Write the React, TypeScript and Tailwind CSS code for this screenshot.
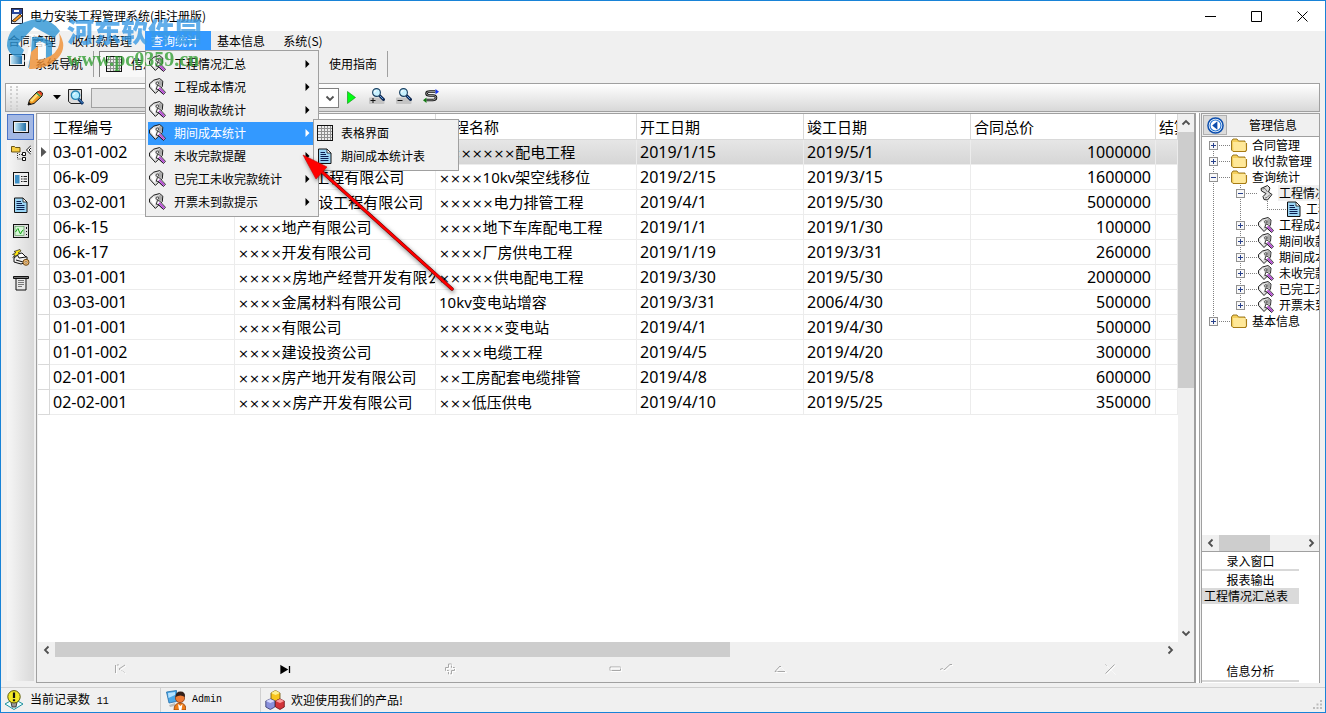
import React from "react";

type IconProps = { className?: string };

function TagIcon({ className = "h-4 w-4" }: IconProps) {
  return (
    <svg viewBox="0 0 16 16" className={`shrink-0 ${className}`} aria-hidden="true">
      <path d="M.5 5.5 4.500 2 10 .5 13 3 12.500 8 6 14.500 .5 8.500Z" fill="#dedede" stroke="#111" strokeWidth=".9" />
      <path d="M1.500 6.500 5 3.500 6.500 8 5 12Z" fill="#fff" />
      <path d="M7.500 4.500 10.500 1.500 12.300 3.500 12 7.500 10 7Z" fill="#a8a8a8" />
      <circle cx="7.800" cy="4.900" r="1.200" fill="#fff" stroke="#222" strokeWidth=".8" />
      <path d="m6.800 10.500 1.200-3.500L10 7.500l5.500 6-1.800 2L8.500 10.800Z" fill="#fff" stroke="#111" strokeWidth=".8" />
      <path d="m9.500 9.300 4.900 5" stroke="#b44ed0" strokeWidth="1.900" />
      <path d="m8.600 10.500 4.600 4.700" stroke="#20102a" strokeWidth=".8" />
    </svg>
  );
}

function GridIcon({ className = "h-4 w-4" }: IconProps) {
  return (
    <svg viewBox="0 0 16 16" className={`shrink-0 ${className}`} shapeRendering="crispEdges" aria-hidden="true">
      <rect x=".5" y=".5" width="15" height="15" fill="#eee" stroke="#111" />
      <path d="M4.500 1v14M7.500 1v14M10.500 1v14M13.500 1v14M1 3.500h14M1 6.500h14M1 9.500h14M1 12.500h14" stroke="#909090" />
    </svg>
  );
}

function DocIcon({ className = "h-4 w-4" }: IconProps) {
  return (
    <svg viewBox="0 0 16 16" className={`shrink-0 ${className}`} aria-hidden="true">
      <path d="M1.500 1h8.500l4 4v10.500H1.500Z" fill="#9bd5f5" stroke="#111" />
      <path d="M10 1v4h4Z" fill="#fff" stroke="#111" strokeWidth=".8" />
      <path d="M3.500 4.500H8M3.500 6.500H9M3.500 8.500h8M3.500 10.500h8M3.500 12.500h8" stroke="#0b1e50" />
    </svg>
  );
}

function WindowIcon({ className = "h-4 w-4" }: IconProps) {
  return (
    <svg viewBox="0 0 16 16" className={`shrink-0 ${className}`} aria-hidden="true">
      <defs>
        <linearGradient id="screen" x1="0" x2="1">
          <stop offset="0" stopColor="#c3e7f8" />
          <stop offset="1" stopColor="#1f6da6" />
        </linearGradient>
      </defs>
      <rect x=".5" y="2.500" width="15" height="11" fill="#eee" stroke="#111" />
      <rect x="2" y="4" width="11" height="8" fill="url(#screen)" />
    </svg>
  );
}

function FolderTreeIcon() {
  return (
    <svg viewBox="0 0 20 16" className="h-4 w-5" aria-hidden="true">
      <path d="M.5 1.500h3l1 1H9v4.500H.5Z" fill="#f7ce43" stroke="#5c4508" strokeWidth=".9" />
      <path d="M6.500 8v6h5M8 9.500h4" stroke="#333" strokeDasharray="1 1" fill="none" />
      <path d="M11.500 7.500h3v3h-3zM11.500 12.500h3v3h-3z" fill="#fff" stroke="#111" />
      <path d="M20 .5 15.500 5 20 9.500M20 3l-2 2 2 2" fill="#fff" stroke="#111" />
    </svg>
  );
}

function ListIcon() {
  return (
    <svg viewBox="0 0 16 16" className="h-4 w-4" aria-hidden="true">
      <rect x=".5" y="1.500" width="15" height="13" fill="#eee" stroke="#111" />
      <rect x="2" y="4" width="4.500" height="8.500" fill="#3f91c7" />
      <path d="M8 5.500h1.500M8 8h1.500M8 10.500h1.500M10.500 5.500h3.500M10.500 8h3.500M10.500 10.500h3.500" stroke="#222" />
    </svg>
  );
}

function ScopeIcon() {
  return (
    <svg viewBox="0 0 16 16" className="h-4 w-4" aria-hidden="true">
      <rect x=".5" y="1.500" width="15" height="13" fill="#ddd" stroke="#111" />
      <rect x="2" y="3.500" width="9" height="9" fill="#d5f7d5" stroke="#4d8f4d" strokeWidth=".6" />
      <path d="M2.500 9 4 6.500 5 5.500 6 8l1.500 3L9 8l1.500-1" stroke="#16a516" fill="none" />
      <path d="M13.500 4v2M13.500 8v1M13.500 11v1" stroke="#111" />
    </svg>
  );
}

function PrintGearIcon() {
  return (
    <svg viewBox="0 0 18 17" className="h-[17px] w-[18px]" aria-hidden="true">
      <path d="m2 9 5-4 8 3v5l-6 2-7-2Z" fill="#eee" stroke="#111" />
      <path d="m5 5 5-1 4 4-7 1ZM4 11l7 2" fill="#fff" stroke="#111" />
      <path d="M8 .5 2 2.500l2 1-3.500 2L3 6 .8 8.500 8 4.500l-2-.5 3-2Z" fill="#ffe712" stroke="#222" strokeWidth=".7" />
      <circle cx="14" cy="13.300" r="3" fill="#f2bc74" stroke="#6e4a18" />
      <circle cx="14" cy="13.300" r="1" fill="#fff" stroke="#6e4a18" strokeWidth=".6" />
    </svg>
  );
}

function ReceiptIcon() {
  return (
    <svg viewBox="0 0 16 16" className="h-4 w-4" aria-hidden="true">
      <path d="M.5 1.500h15v2H.5Z" fill="#777" stroke="#111" />
      <path d="M3 3.500h10V15H3Z" fill="#e8e8e8" stroke="#111" />
      <path d="M5 5.500h6M5 7.500h6M5 9.500h6M5 11.500h4" stroke="#777" />
    </svg>
  );
}

function FolderIcon() {
  return (
    <svg viewBox="0 0 18 15" className="h-[15px] w-[18px] shrink-0" aria-hidden="true">
      <path d="M1.500 3 3 1h4l1.500 2H15v9.500l-1 1H3L1.500 12Z" fill="#f4cf5c" stroke="#906b12" strokeWidth=".9" />
      <path d="M3 4h12.500l.5 8-1 1.500H3.500Z" fill="#ffe898" />
      <path d="M3 13.500h12.500l1-1.500V5" fill="none" stroke="#a77b13" strokeWidth="1.100" />
    </svg>
  );
}

function ScrollIcon() {
  return (
    <svg viewBox="0 0 16 16" className="h-4 w-4 shrink-0" aria-hidden="true">
      <path d="m3 3.500 6.500-3L12 3l-1.500 4L14 9.500 9.500 15 6 14.500l-1-3L8 8.500 3.500 6Z" fill="#ddd" stroke="#222" />
      <path d="M4.500 4 7 3.500 9.500 7M7 13l2-.5 3-3" fill="none" stroke="#555" strokeWidth=".8" />
    </svg>
  );
}

function PencilIcon() {
  return (
    <svg viewBox="0 0 16 16" className="h-4 w-4" aria-hidden="true">
      <path d="M1 15 2.500 10 10 2l3-1 2.500 2-.5 3-8 7.500Z" fill="#f29b22" stroke="#111" />
      <path d="m3 10.500 7-7.500 2 1.500-7 7.500" fill="#ffe077" />
      <path d="m10.500 2 1.700-1 3 2.300-.7 2.200Z" fill="#e03a24" />
      <path d="m9.500 3 4 3.500" stroke="#2f9a58" strokeWidth="1.300" />
      <path d="m1 15 1-3 2 1.700Z" fill="#111" />
    </svg>
  );
}

function FindDocIcon() {
  return (
    <svg viewBox="0 0 16 17" className="h-[17px] w-4" aria-hidden="true">
      <path d="M.5.5h13v14H3l-2.500-2Z" fill="#ddd" stroke="#222" />
      <circle cx="7.500" cy="6.200" r="4.200" fill="#b4edff" stroke="#2583b2" strokeWidth="1.300" />
      <path d="M5.500 6a2.500 2.500 0 0 1 2-2" stroke="#fff" fill="none" />
      <path d="m10.500 10 4.500 5" stroke="#123a70" strokeWidth="3" />
      <path d="m11 10 3.500 4" stroke="#4c8fd0" strokeWidth="1" />
    </svg>
  );
}

function ZoomIcon({ plus }: { plus?: boolean }) {
  return (
    <svg viewBox="0 0 16 16" className="h-4 w-4" aria-hidden="true">
      <rect x="0" y="9.500" width="15.500" height="6.500" rx="1" fill="#c4c4c4" />
      <path d="m10.500 7.500 4 4" stroke="#0e2750" strokeWidth="3" strokeLinecap="round" />
      <path d="m11 8 3 3" stroke="#5c9be0" strokeWidth="1" />
      <circle cx="7.500" cy="4.500" r="3.900" fill="#c8f2ff" stroke="#173e60" strokeWidth="1.100" />
      <path d="M5.500 4.500a2 2 0 0 1 2-2" fill="none" stroke="#fff" />
      <path d={plus ? "M1.500 12.500h5M4 10v5" : "M1.500 12.500h5"} stroke="#111" />
    </svg>
  );
}

function SwapIcon() {
  return (
    <svg viewBox="0 0 16 14" className="h-[14px] w-4" aria-hidden="true">
      <path d="M12.500 2.500H7Q3.500 2.500 3.500 4.500T7 6.500h3q3 0 3 2.300T9.500 11H3.500" fill="none" stroke="#111" strokeWidth="2.600" />
      <path d="M12 2.500H7Q3.500 2.500 3.500 4.500T7 6.500h3q3 0 3 2.300T9.500 11H4" fill="none" stroke="#c8c8c8" strokeWidth=".7" />
      <path d="m12.500 0 3.500 2.700-3.500 2.500Z" fill="#1734f0" />
      <path d="M3.500 8.500 0 11.200 3.500 14Z" fill="#127a12" />
    </svg>
  );
}

function AppIcon() {
  return (
    <svg viewBox="0 0 14 16" className="h-4 w-[14px]" aria-hidden="true">
      <rect x="1.500" y=".5" width="11" height="15" fill="#e8eef8" stroke="#223" />
      <rect x="2" y="1" width="10" height="5" fill="#28479c" />
      <path d="M4 2h5v2H4z" fill="#fff" />
      <path d="m2 13 8-7 2 2-7 6Z" fill="#f4941f" stroke="#111" strokeWidth=".8" />
    </svg>
  );
}

function BulbIcon() {
  return (
    <svg viewBox="0 0 20 20" className="h-5 w-5" aria-hidden="true">
      <path d="m1 14 9-5 9 5-9 5.500Z" fill="#e9ffff" stroke="#1c8f9d" />
      <path d="M7 12h6l-1 5H8Z" fill="#999" stroke="#222" strokeWidth=".8" />
      <circle cx="10" cy="6.800" r="6.200" fill="#f3e927" stroke="#5c5a0a" />
      <path d="M10 2.500V8M10 9.300v2" stroke="#111" strokeWidth="2.200" />
    </svg>
  );
}

function UserIcon() {
  return (
    <svg viewBox="0 0 20 20" className="h-5 w-5" aria-hidden="true">
      <path d="m.5 2 10-1.500v11L3 13Z" fill="#4aa7e8" stroke="#236da8" strokeWidth=".8" />
      <path d="m2 3 7-1v3L2.500 8Z" fill="#b6e2ff" />
      <path d="m3 15 6-2v3l-5 1Z" fill="#bbb" />
      <path d="M8 20q0-7 6-7t6 7Z" fill="#ef7c17" stroke="#913c05" strokeWidth=".8" />
      <path d="m12 14 2.500 2 2-2-1 6h-2.500Z" fill="#fff" />
      <circle cx="14" cy="8" r="4.600" fill="#ef7b35" stroke="#7e310a" strokeWidth=".7" />
      <path d="M9.500 7q0-5.500 5-5.500T19 7q-4.500-3-9.500 0Z" fill="#35201a" />
    </svg>
  );
}

function CubesIcon() {
  return (
    <svg viewBox="0 0 20 20" className="h-5 w-5" aria-hidden="true">
      <path d="m6 3 4.500-2.500L15 3v6l-4.500 2L6 9Z" fill="#f8c51d" stroke="#6d5205" strokeWidth=".8" />
      <path d="m6 3 4.500 2L15 3l-4.500-2.500Z" fill="#fff18d" />
      <path d="m.8 11 4.500-2 4.500 2v6L5.300 19.500.8 17Z" fill="#8a91dc" stroke="#30346a" strokeWidth=".8" />
      <path d="m.8 11 4.500 2 4.500-2-4.500-2Z" fill="#d6d9ff" />
      <path d="m10.500 11 4.500-2 4.300 2v6L15 19.500 10.500 17Z" fill="#d2343a" stroke="#6b1014" strokeWidth=".8" />
      <path d="m10.500 11 4.500 2 4.300-2L15 9Z" fill="#ff9b9b" />
    </svg>
  );
}

function Chevron({ dir, className = "" }: { dir: "up" | "down" | "left" | "right"; className?: string }) {
  const d = { up: "M1.500 6.500 5 3l3.500 3.500", down: "M1.500 3.500 5 7l3.500-3.500", left: "M6.500 1.500 3 5l3.500 3.500", right: "M3.500 1.500 7 5 3.500 8.500" }[dir];
  return (
    <svg viewBox="0 0 10 10" className={`h-[10px] w-[10px] ${className}`} aria-hidden="true">
      <path d={d} fill="none" stroke="#505050" strokeWidth="1.800" />
    </svg>
  );
}

const menuItems = ["工程情况汇总", "工程成本情况", "期间收款统计", "期间成本统计", "未收完款提醒", "已完工未收完款统计", "开票未到款提示"];

function DropMenu() {
  return (
    <ul role="menu" className="absolute left-0 top-full z-20 w-[174px] border border-[#a0a0a0] bg-[#f0f0f0] p-[2px] text-black">
      {menuItems.map((label, i) => {
        const active = i === 3;
        return (
          <li key={label} role="none" className="relative">
            <button role="menuitem" className={`flex h-[23px] w-full items-center pb-[2px] pl-px text-left ${active ? "bg-[#3399ff] text-white" : ""}`}>
              <TagIcon className="h-[17px] w-[17px]" />
              <span className="ml-2 flex-1 whitespace-nowrap">{label}</span>
              <svg viewBox="0 0 5 8" className="mr-[6px] h-2 w-[5px]" aria-hidden="true">
                <path d="M.5 0 4.500 4 .5 8Z" fill={active ? "#fff" : "#000"} />
              </svg>
            </button>
            {active && (
              <ul role="menu" className="absolute -top-[3px] left-[165px] z-30 w-[146px] border border-[#a0a0a0] bg-[#f0f0f0] p-[2px]">
                <li role="none">
                  <button role="menuitem" className="flex h-[23px] w-full items-center gap-2 whitespace-nowrap pb-[2px] pl-px">
                    <GridIcon />表格界面
                  </button>
                </li>
                <li role="none">
                  <button role="menuitem" className="flex h-[23px] w-full items-center gap-2 whitespace-nowrap pb-[2px] pl-px">
                    <DocIcon />期间成本统计表
                  </button>
                </li>
              </ul>
            )}
          </li>
        );
      })}
    </ul>
  );
}

const headers = ["工程编号", "客户名称", "工程名称", "开工日期", "竣工日期", "合同总价", "结算"];
const rows: string[][] = [
  ["03-01-002", "××××", "×××××××配电工程", "2019/1/15", "2019/5/1", "1000000"],
  ["06-k-09", "×××××××工程有限公司", "××××10kv架空线移位", "2019/2/15", "2019/3/15", "1600000"],
  ["03-02-001", "××××××建设工程有限公司", "×××××电力排管工程", "2019/4/1", "2019/5/30", "5000000"],
  ["06-k-15", "××××地产有限公司", "××××地下车库配电工程", "2019/1/1", "2019/1/30", "100000"],
  ["06-k-17", "××××开发有限公司", "××××厂房供电工程", "2019/1/19", "2019/3/31", "260000"],
  ["03-01-001", "×××××房地产经营开发有限公司", "×××××供电配电工程", "2019/3/30", "2019/5/30", "2000000"],
  ["03-03-001", "××××金属材料有限公司", "10kv变电站增容", "2019/3/31", "2006/4/30", "500000"],
  ["01-01-001", "××××有限公司", "××××××变电站", "2019/4/1", "2019/4/30", "500000"],
  ["01-01-002", "××××建设投资公司", "××××电缆工程", "2019/4/5", "2019/4/20", "300000"],
  ["02-01-001", "××××房产地开发有限公司", "××工房配套电缆排管", "2019/4/8", "2019/5/8", "600000"],
  ["02-02-001", "×××××房产开发有限公司", "×××低压供电", "2019/4/10", "2019/5/25", "350000"],
];

function Masked({ text }: { text: string }) {
  const rest = text.replace(/^×+/, "");
  const marks = text.slice(0, text.length - rest.length);
  return (
    <>
      {marks && <span className="font-['DejaVu_Sans'] text-[13px] leading-none">{marks}</span>}
      {rest}
    </>
  );
}

function DataGrid() {
  return (
    <table className="w-full table-fixed border-separate border-spacing-0 whitespace-nowrap font-['Noto_Sans','Noto_Sans_CJK_SC',sans-serif] text-[15px] leading-6">
      <colgroup>
        <col className="w-3" />
        <col className="w-[185px]" />
        <col className="w-[201px]" />
        <col className="w-[201px]" />
        <col className="w-[167px]" />
        <col className="w-[167px]" />
        <col className="w-[185px]" />
        <col />
      </colgroup>
      <thead>
        <tr className="h-[26px] text-left">
          <th className="border-b border-r border-[#d9d9d9] p-0" aria-label="当前行" />
          {headers.map((h) => (
            <th key={h} className="overflow-hidden border-b border-r border-[#d9d9d9] p-0 pl-[3px] font-normal">{h}</th>
          ))}
        </tr>
      </thead>
      <tbody>
        {rows.map((row, r) => (
          <tr key={row[0]}>
            <td className="border-b border-r border-[#d9d9d9] p-0">
              {r === 0 && (
                <svg viewBox="0 0 6 10" className="mx-auto h-[10px] w-[6px]" aria-hidden="true"><path d="M0 0 5.500 5 0 10Z" fill="#555" /></svg>
              )}
            </td>
            {[...row, ""].map((cell, c) => (
              <td
                key={c}
                className={`overflow-hidden border-b border-r border-[#ececec] p-0 ${c === 5 ? "pr-1 text-right" : "pl-[3px]"} ${c === 1 || c === 2 ? "text-[15px]" : "text-[16px]"} ${r === 0 && c > 0 ? "bg-linear-to-b from-[#e6e6e6] to-[#d6d6d6]" : ""}`}
              >
                <div className="h-6 overflow-hidden leading-6"><Masked text={cell} /></div>
              </td>
            ))}
          </tr>
        ))}
      </tbody>
    </table>
  );
}

const recordButtons: { label: string; d: string; on?: boolean }[] = [
  { label: "首记录", d: "M1.500 2v8M11 2 5 6l6 4M3 2h2" },
  { label: "末记录", d: "M2 3 8 6.500 2 10ZM10.500 3v7", on: true },
  { label: "新增", d: "M4.500 1h3v3.500h3v3h-3V11h-3V7.500h-3v-3h3Z" },
  { label: "删除", d: "M1 4h10.500v3.500H1Z" },
  { label: "编辑", d: "M1 8.500 6 3l5.500 5.500Z" },
  { label: "保存", d: "M1 6.500 3.500 5.500 5 7l6-5.500 2 0" },
  { label: "取消", d: "m1.500 1.500 9 9M10.500 1.500l-9 9" },
];

function Recorder() {
  return (
    <div className="grid h-[25px] grid-cols-7">
      {recordButtons.map((b) => (
        <button key={b.label} aria-label={b.label} disabled={!b.on} className="flex items-center justify-center">
          <svg viewBox="0 0 14 13" className="h-[13px] w-[14px]" aria-hidden="true">
            {b.on ? (
              <path d={b.d} fill="#000" stroke="#000" strokeWidth="1.300" />
            ) : (
              <>
                <path d={b.d} fill="none" stroke="#a8a8a8" />
                <path d={b.d} fill="none" stroke="#fff" transform="translate(1 1)" strokeOpacity=".9" />
              </>
            )}
          </svg>
        </button>
      ))}
    </div>
  );
}

type Node = { level: 0 | 1 | 2; label: string; open?: boolean; last?: boolean; first?: boolean };
const tree: Node[] = [
  { level: 0, label: "合同管理", first: true },
  { level: 0, label: "收付款管理" },
  { level: 0, label: "查询统计", open: true },
  { level: 1, label: "工程情况汇总", open: true },
  { level: 2, label: "工程情况汇总表" },
  { level: 1, label: "工程成本情况" },
  { level: 1, label: "期间收款统计" },
  { level: 1, label: "期间成本统计" },
  { level: 1, label: "未收完款提醒" },
  { level: 1, label: "已完工未收完款统计" },
  { level: 1, label: "开票未到款提示", last: true },
  { level: 0, label: "基本信息", last: true },
];

function Branch({ x, box, open, first, last, elbow }: { x: number; box?: boolean; open?: boolean; first?: boolean; last?: boolean; elbow?: boolean }) {
  return (
    <svg viewBox="0 0 28 16" className="h-4 w-7 shrink-0" shapeRendering="crispEdges" aria-hidden="true">
      <path d={`M${x}.5 ${first ? 8 : 0}V${last || elbow ? 8 : 16}`} stroke="#808080" strokeDasharray="1 1" />
      {(box || elbow) && <path d={`M${x} 8.500H28`} stroke="#808080" strokeDasharray="1 1" />}
      {box && (
        <>
          <rect x={x - 4 + 0.5} y="4.500" width="8" height="8" fill="#f8f8f8" stroke="#919191" />
          <path d={open ? `M${x - 2} 8.500h5` : `M${x - 2} 8.500h5M${x}.5 6v5`} stroke="#27408b" />
        </>
      )}
    </svg>
  );
}

function TreeView() {
  return (
    <ul role="tree" className="min-h-0 flex-1 overflow-hidden text-[12px] leading-4">
      {tree.map((n) => (
        <li key={n.label} role="treeitem" className="flex h-4 items-center whitespace-nowrap">
          {n.level === 0 ? <Branch x={11} box open={n.open} first={n.first} last={n.last} /> : <Branch x={11} />}
          {n.level === 1 && <Branch x={10} box open={n.open} last={n.last} />}
          {n.level === 2 && (
            <>
              <Branch x={10} />
              <Branch x={9} elbow />
            </>
          )}
          {n.level === 0 && <FolderIcon />}
          {n.level === 1 && (n.open ? <ScrollIcon /> : <TagIcon className="h-4 w-4" />)}
          {n.level === 2 && <DocIcon />}
          <span className={n.level === 1 && n.open ? "ml-1 bg-[#f0f0f0] px-px" : n.level === 1 ? "ml-1 px-px" : "ml-1"}>{n.label}</span>
        </li>
      ))}
    </ul>
  );
}

function SidePanel() {
  return (
    <aside className="flex w-[119px] flex-col border border-b-0 border-[#a0a0a0] bg-white">
      <div className="flex h-[23px] items-center border-b border-[#a0a0a0] bg-[#f0f0f0]">
        <button aria-label="收起" className="ml-px flex h-[20px] w-6 items-center justify-center border border-[#b0b0b0] bg-[#dcdcdc]">
          <svg viewBox="0 0 18 18" className="h-[17px] w-[17px]" aria-hidden="true">
            <circle cx="9" cy="9" r="8" fill="#fff" stroke="#0d4fae" strokeWidth="1.600" />
            <circle cx="9" cy="9" r="5.800" fill="#fff" stroke="#1c6fd2" strokeWidth="1.200" />
            <path d="M11 4.500 5.500 9l5.500 4.500Z" fill="#0c4cab" />
          </svg>
        </button>
        <h2 className="flex-1 text-center">管理信息</h2>
      </div>
      <TreeView />
      <div className="flex h-4 shrink-0 items-center bg-[#f0f0f0]">
        <button aria-label="向左滚动" className="flex w-[17px] justify-center"><Chevron dir="left" /></button>
        <div className="h-full flex-1"><div className="h-full w-[62%] bg-[#cdcdcd]" /></div>
        <button aria-label="向右滚动" className="flex w-[17px] justify-center"><Chevron dir="right" /></button>
      </div>
      <div className="flex h-[132px] shrink-0 flex-col border-t border-[#a0a0a0] pb-px pr-5">
        <button className="h-[19px] border-b-2 border-[#d8d8d8] leading-4">录入窗口</button>
        <button className="h-[17px] leading-[17px]">报表输出</button>
        <button className="h-4 whitespace-nowrap bg-[#dadada] pl-[2px] text-left leading-4">工程情况汇总表</button>
        <button className="mt-auto h-5 border-b-2 border-[#d8d8d8] leading-4">信息分析</button>
      </div>
    </aside>
  );
}

function Watermark() {
  return (
    <div className="pointer-events-none absolute left-1 top-3 z-40 flex items-start opacity-80">
      <svg viewBox="0 0 60 58" className="h-[58px] w-[60px]" aria-hidden="true">
        <path d="M2 33Q2 15 20 9 42 0 55 18L49 25 29 14 13 31 19 37 16 44Q4 44 2 33Z" fill="#2d94d4" />
        <path d="M24 21h9v7l8 1-1 15q-4 6-7 8V33h-6v13q-4 3-9 3 7-7 6-28Z" fill="#fff" />
        <path d="M27 24h10l10 5v14l-6 3V31l-6-3-4 2v20l-8 5 3-14Z" fill="#2d94d4" />
        <path d="M54 20Q63 34 53 45 42 57 24 56l2-17 7-6v14q15-2 20-12 3-7 1-15Z" fill="#f08f32" />
      </svg>
      <div className="ml-[2px] flex flex-col">
        <span className="font-['Noto_Sans_CJK_SC',sans-serif] text-[27px] font-black leading-9 text-[#3a9be6]">河东软件园</span>
        <span className="font-['Liberation_Serif',serif] text-[20px] font-bold leading-5 text-[#35a035]">www.pc0359.cn</span>
      </div>
    </div>
  );
}

const sideTools: { label: string; icon: React.ReactNode }[] = [
  { label: "窗口", icon: <WindowIcon /> },
  { label: "目录", icon: <FolderTreeIcon /> },
  { label: "列表", icon: <ListIcon /> },
  { label: "文档", icon: <DocIcon /> },
  { label: "图表", icon: <ScopeIcon /> },
  { label: "打印设置", icon: <PrintGearIcon /> },
  { label: "票据", icon: <ReceiptIcon /> },
];

export default function App() {
  return (
    <div className="relative flex h-screen min-h-[500px] flex-col overflow-hidden border border-[#1883d7] bg-[#f0f0f0] font-['Noto_Sans_CJK_SC',sans-serif] text-[12px] leading-4 text-black">
      <header className="flex h-[30px] shrink-0 items-center bg-white pl-[9px]">
        <AppIcon />
        <h1 className="ml-[6px] flex-1">电力安装工程管理系统(非注册版)</h1>
        <button aria-label="最小化" className="flex w-[46px] justify-center"><svg viewBox="0 0 11 11" className="h-[11px] w-[11px]"><path d="M0 5.500h11" stroke="#000" /></svg></button>
        <button aria-label="最大化" className="flex w-[46px] justify-center"><svg viewBox="0 0 11 11" className="h-[11px] w-[11px]"><path d="M.5.5h10v10H.5Z" fill="none" stroke="#000" /></svg></button>
        <button aria-label="关闭" className="flex w-[46px] justify-center"><svg viewBox="0 0 11 11" className="h-[11px] w-[11px]"><path d="m.5.5 10 10M10.500.5l-10 10" stroke="#000" /></svg></button>
      </header>

      <nav className="flex h-[19px] shrink-0 items-stretch whitespace-nowrap">
        <button className="w-16 pr-[2px]">合同管理</button>
        <button className="w-20 pr-[6px]">收付款管理</button>
        <div className="relative">
          <button className="h-full w-[66px] bg-[#3399ff] pr-[6px] text-white">查询统计</button>
          <DropMenu />
        </div>
        <button className="w-[60px]">基本信息</button>
        <button className="w-16">系统(S)</button>
      </nav>

      <div className="flex h-[33px] shrink-0 items-start whitespace-nowrap pt-px">
        <button className="flex h-[26px] w-[93px] items-center border-r border-[#a0a0a0] pl-2">
          <WindowIcon className="mb-2 h-4 w-4" />
          <span className="ml-[10px]">系统导航</span>
        </button>
        <button className="ml-[5px] flex h-[26px] w-[120px] items-center border-l border-t border-[#808080] bg-[#f8f8f8] pb-[2px] pl-[6px]">
          <GridIcon />
          <span className="ml-[9px]">信息</span>
        </button>
        <button className="ml-[98px] flex h-[26px] w-[71px] items-center border-r border-[#a0a0a0] pl-3">使用指南</button>
      </div>

      <div className="ml-1 mr-[5px] flex h-[29px] shrink-0 items-center border border-[#a0a0a0] bg-linear-to-b from-white to-[#d8d8d8]">
        <span className="ml-1 h-6 w-2 border-x-2 border-dotted border-[#cfcfcf]" />
        <button aria-label="编辑" className="ml-[9px]"><PencilIcon /></button>
        <button aria-label="编辑选项" className="ml-[10px]"><svg viewBox="0 0 8 5" className="h-[5px] w-2"><path d="M0 0h8L4 4.500Z" fill="#000" /></svg></button>
        <button aria-label="查找" className="ml-[7px]"><FindDocIcon /></button>
        <input aria-label="查找内容" className="ml-[7px] h-5 w-[120px] border border-[#a0a0a0] bg-[#e4e4e4]" />
        <div className="relative ml-2">
          <select aria-label="查找范围" className="block h-5 w-[120px] appearance-none border border-[#808080] bg-white"><option value=""></option></select>
          <Chevron dir="down" className="pointer-events-none absolute right-1 top-[5px]" />
        </div>
        <button aria-label="执行" className="ml-2"><svg viewBox="0 0 9 13" className="h-[13px] w-[9px]"><path d="M.5.5 8.500 6.500.5 12.500Z" fill="#00ff12" stroke="#068b10" strokeWidth=".6" /></svg></button>
        <button aria-label="放大" className="mb-1 ml-[13px]"><ZoomIcon plus /></button>
        <button aria-label="缩小" className="mb-1 ml-[11px]"><ZoomIcon /></button>
        <button aria-label="刷新" className="mb-1 ml-[11px]"><SwapIcon /></button>
      </div>

      <main className="mt-px flex min-h-0 flex-1 pr-[5px]">
        <div className="mb-[2px] ml-[6px] mt-px flex w-[27px] flex-col bg-[#e8e8e8] bg-linear-to-r from-[#f6f6f6] to-[#d9d9d9]">
          {sideTools.map((t, i) => (
            <button
              key={t.label}
              aria-label={t.label}
              className={`flex h-[26px] w-full items-center justify-center ${i === 0 ? "border border-[#4a74c9] bg-[#a3b8e4]" : ""}`}
            >
              {t.icon}
            </button>
          ))}
        </div>
        <section className="ml-[2px] flex min-w-0 flex-1 flex-col border border-r-2 border-[#a0a0a0] bg-[#f0f0f0] pl-px">
          <div className="flex min-h-0 flex-1">
            <div className="min-w-0 flex-1 overflow-hidden bg-white"><DataGrid /></div>
            <div className="flex w-4 flex-col items-center">
              <button aria-label="向上滚动" className="flex h-[18px] items-center"><Chevron dir="up" /></button>
              <div className="w-full flex-1"><div className="h-[52%] w-full bg-[#cdcdcd]" /></div>
              <button aria-label="向下滚动" className="flex h-[18px] items-center"><Chevron dir="down" /></button>
            </div>
          </div>
          <div className="mr-4 flex h-[15px] items-center">
            <button aria-label="向左滚动" className="flex w-[17px] justify-center"><Chevron dir="left" /></button>
            <div className="h-full flex-1"><div className="h-full w-[61%] bg-[#cdcdcd]" /></div>
            <button aria-label="向右滚动" className="flex w-[17px] justify-center"><Chevron dir="right" /></button>
          </div>
          <Recorder />
        </section>
        <div className="w-[3px] bg-white" />
        <div className="mr-px w-px bg-[#a0a0a0]" />
        <SidePanel />
      </main>

      <footer className="mt-1 flex h-[25px] shrink-0 items-stretch border-t border-[#d0d0d0]">
        <div className="flex w-40 items-center gap-[6px] border-r border-[#d0d0d0] pl-[3px]">
          <BulbIcon />
          <span>当前记录数 <span className="ml-1 font-['Liberation_Mono',monospace] text-[10px]">11</span></span>
        </div>
        <div className="flex w-[100px] items-center gap-[6px] border-r border-[#d0d0d0] pl-[5px]">
          <UserIcon />
          <span className="font-['Liberation_Mono',monospace] text-[10px]">Admin</span>
        </div>
        <div className="flex flex-1 items-center gap-[6px] pl-1"><CubesIcon />欢迎使用我们的产品!</div>
        <svg viewBox="0 0 10 10" className="mb-[2px] mr-[2px] h-[10px] w-[10px] self-end" aria-hidden="true">
          <path d="M7 0h2v2H7zM7 3.500h2v2H7zM7 7h2v2H7zM3.500 3.500h2v2h-2zM3.500 7h2v2h-2zM0 7h2v2H0z" fill="#bdbdbd" />
        </svg>
      </footer>

      <svg viewBox="0 0 160 145" className="pointer-events-none absolute left-[299px] top-[150px] z-30 h-[145px] w-[160px] drop-shadow-[1px_2px_2px_rgba(0,0,0,0.5)]" aria-hidden="true">
        <path d="M152 138 20 19" stroke="#600000" strokeWidth="3.400" strokeLinecap="round" />
        <path d="M152 138 20 19" stroke="#ff0000" strokeWidth="2.400" strokeLinecap="round" />
        <path d="M3 4 27 16 16 28Z" fill="#ff0000" stroke="#d00000" strokeWidth=".6" strokeLinejoin="round" />
      </svg>
      <Watermark />
    </div>
  );
}
